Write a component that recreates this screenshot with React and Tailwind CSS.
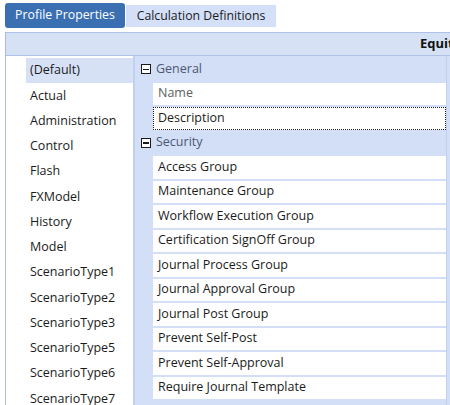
import React from 'react';

const scenarios = [
  '(Default)', 'Actual', 'Administration', 'Control', 'Flash', 'FXModel', 'History',
  'Model', 'ScenarioType1', 'ScenarioType2', 'ScenarioType3', 'ScenarioType5',
  'ScenarioType6', 'ScenarioType7', 'ScenarioType8',
];

const security = [
  'Access Group', 'Maintenance Group', 'Workflow Execution Group', 'Certification SignOff Group',
  'Journal Process Group', 'Journal Approval Group', 'Journal Post Group',
  'Prevent Self-Post', 'Prevent Self-Approval', 'Require Journal Template',
];

// collapse box in front of each category
const MinusBox = () => (
  <div className="w-[10px] h-[10px] border border-[#1a1a1a] bg-white flex items-center justify-center">
    <div className="w-[6px] h-[1.5px] bg-[#1a1a1a]"></div>
  </div>
);

const Category = ({ label }) => (
  <div className="h-[22.5px] mb-[2px] flex items-center">
    <div className="w-[21px] pl-[6px] flex items-center">
      <MinusBox />
    </div>
    <span className="text-[#4b5872]">{label}</span>
  </div>
);

const Row = ({ label, muted, focused }) => (
  <div className="h-[22.5px] mb-[2px] ml-[18px] bg-white flex items-center">
    <div
      className={
        'h-full w-full flex items-center ' +
        (focused ? 'border border-dotted border-[#222] pl-[4px]' : 'pl-[5px]')
      }
    >
      <span className={muted ? 'text-[#5e5e5e]' : 'text-[#1b1b1b]'}>{label}</span>
    </div>
  </div>
);

export default function App() {
  return (
    <div className="w-[450px] h-[405px] overflow-hidden bg-white text-[12.5px] font-['Open_Sans',sans-serif] flex flex-col">
      {/* Tabs */}
      <div className="h-[32px] flex items-start pt-[3px] pl-[5px] gap-[1px] shrink-0">
        <div className="h-[25px] w-[120px] bg-[#3a70b2] text-white rounded-[3px] flex items-center justify-center text-[12.3px]">
          Profile Properties
        </div>
        <div className="mt-[2px] h-[22px] w-[150px] bg-[#d4e0f7] text-[#1b1b1b] flex items-center justify-center text-[12.3px]">
          Calculation Definitions
        </div>
      </div>

      <div className="ml-[5px] border-l border-[#a9bce4] flex-1 flex flex-col min-h-0">
        {/* Header */}
        <div className="h-[24px] shrink-0 bg-[#d6e1f6] border-t border-b border-[#adc0e6] flex items-center overflow-hidden whitespace-nowrap pl-[414px] font-bold text-[13px] text-[#111]">
          Equity Scenario Type Properties
        </div>

        <div className="flex flex-1 min-h-0">
          {/* Scenario list */}
          <div className="w-[127px] shrink-0 pl-[20px] pt-[2px] overflow-hidden">
            {scenarios.map((s, i) => (
              <div
                key={s}
                className={
                  'h-[25.25px] flex items-center pl-[4px] text-[#1b1b1b] whitespace-nowrap ' +
                  (i === 0 ? 'bg-[#d6e1f6]' : '')
                }
              >
                {s}
              </div>
            ))}
          </div>

          {/* Property grid */}
          <div className="flex-1 flex bg-[#d3dff6] overflow-hidden">
            <div className="w-[2px] bg-[#c2d0ef]"></div>
            <div className="flex-1 pt-[2px] whitespace-nowrap">
              <Category label="General" />
              <Row label="Name" muted />
              <Row label="Description" focused />
              <Category label="Security" />
              {security.map((r) => (
                <Row key={r} label={r} />
              ))}
            </div>
            <div className="w-[4px] border-l border-[#c2d0ef]"></div>
          </div>
        </div>
      </div>
    </div>
  );
}
